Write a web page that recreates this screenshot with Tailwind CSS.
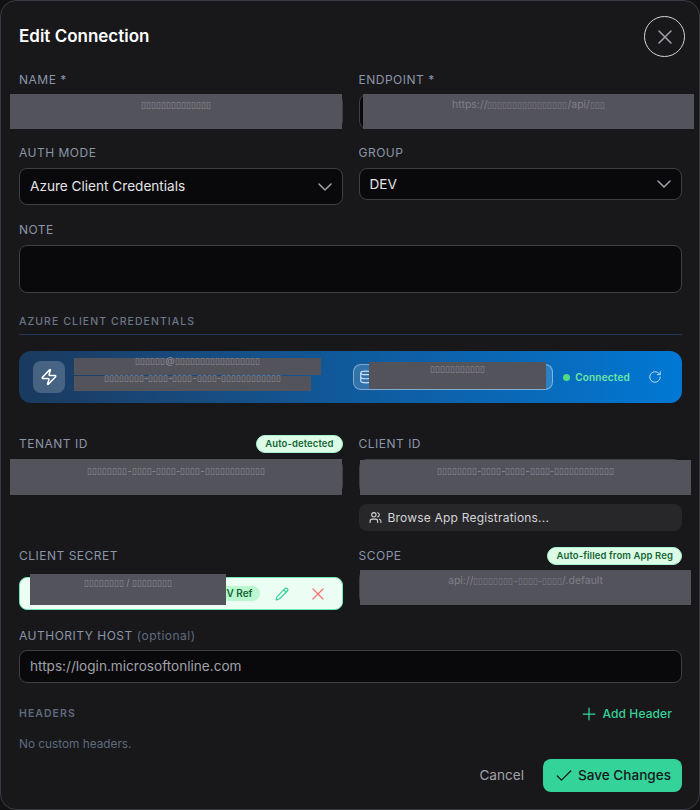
<!DOCTYPE html>
<html lang="en">
<head>
  <meta charset="UTF-8">
  <title>Edit Connection</title>
  <script src="https://cdn.jsdelivr.net/npm/@tailwindcss/browser@4"></script>
</head>
<body class="bg-[#111114] font-['Inter',sans-serif]">
  <div class="relative w-[700px] h-[810px] overflow-hidden rounded-2xl border border-[#3a3a42] bg-[#18181b] pl-[18px] pr-[17px] pt-[15px] text-white">

    <!-- Header -->
    <div class="flex h-[41px] items-center justify-between">
      <h2 class="text-[17px] font-semibold">Edit Connection</h2>
      <button class="-mr-[3px] flex h-[41px] w-[41px] items-center justify-center rounded-full border border-[#d4d4d8] text-[#a1a1aa]">
        <svg width="24" height="24" viewBox="0 0 24 24" fill="none" stroke="currentColor" stroke-width="1.5" stroke-linecap="round"><path d="M18 6 6 18M6 6l12 12"/></svg>
      </button>
    </div>

    <!-- Name / endpoint / auth / group -->
    <div class="mt-[15px] grid grid-cols-2 gap-x-4">
      <div>
        <label class="mb-[6px] block text-xs leading-4 tracking-[0.5px] text-[#8b95a7]">NAME *</label>
        <div class="h-[35px] rounded-lg border border-[#3f3f46] bg-[#09090b]"></div>
      </div>
      <div>
        <label class="mb-[6px] block text-xs leading-4 tracking-[0.5px] text-[#8b95a7]">ENDPOINT *</label>
        <div class="h-[35px] rounded-lg border border-[#3f3f46] bg-[#09090b]"></div>
      </div>
      <div class="mt-4">
        <label class="mb-[7px] block text-xs leading-4 tracking-[0.5px] text-[#8b95a7]">AUTH MODE</label>
        <div class="flex h-[37px] items-center justify-between rounded-lg border border-[#3f3f46] bg-[#09090b] pl-[10px] pr-[5px] text-[13.6px] text-[#e4e4e7]">
          Azure Client Credentials
          <svg width="24" height="24" viewBox="0 0 24 24" fill="none" stroke="#a1a1aa" stroke-width="1.5" stroke-linecap="round" stroke-linejoin="round"><path d="m6 9 6 6 6-6"/></svg>
        </div>
      </div>
      <div class="mt-4">
        <label class="mb-[7px] block text-xs leading-4 tracking-[0.5px] text-[#8b95a7]">GROUP</label>
        <div class="flex h-[32px] items-center justify-between rounded-lg border border-[#3f3f46] bg-[#09090b] pl-[10px] pr-[5px] text-[13.6px] text-[#e4e4e7]">
          DEV
          <svg width="24" height="24" viewBox="0 0 24 24" fill="none" stroke="#a1a1aa" stroke-width="1.5" stroke-linecap="round" stroke-linejoin="round"><path d="m6 9 6 6 6-6"/></svg>
        </div>
      </div>
    </div>

    <!-- Note -->
    <div class="mt-[17px]">
      <label class="mb-[7px] block text-xs leading-4 tracking-[0.5px] text-[#8b95a7]">NOTE</label>
      <div class="h-[48px] rounded-lg border border-[#3f3f46] bg-[#09090b]"></div>
    </div>

    <!-- Azure section -->
    <div class="mt-[21px] border-b border-[#24365a] pb-[4px] text-[10.5px] leading-4 font-medium tracking-widest text-[#6b7688]">AZURE CLIENT CREDENTIALS</div>

    <div class="mt-4 flex h-[52px] items-center rounded-xl bg-gradient-to-r from-[#1a3a5f] via-[#0f5a9c] to-[#0078d4] pl-[14px] pr-5">
      <div class="flex h-8 w-8 items-center justify-center rounded-lg bg-white/20">
        <svg width="18" height="18" viewBox="0 0 24 24" fill="none" stroke="white" stroke-width="2" stroke-linejoin="round"><path d="M4 14a1 1 0 0 1-.78-1.63l9.9-10.2a.5.5 0 0 1 .86.46l-1.92 6.02A1 1 0 0 0 13 10h7a1 1 0 0 1 .78 1.63l-9.9 10.2a.5.5 0 0 1-.86-.46l1.92-6.02A1 1 0 0 0 11 14z"/></svg>
      </div>
      <div class="ml-auto flex h-[26px] w-[200px] items-center rounded-lg border border-white/40 bg-white/15 pl-[5px]">
        <svg width="14" height="14" viewBox="0 0 24 24" fill="none" stroke="#cfe3f5" stroke-width="2"><ellipse cx="12" cy="5" rx="9" ry="3"/><path d="M3 5v14a9 3 0 0 0 18 0V5"/><path d="M3 12a9 3 0 0 0 18 0"/></svg>
      </div>
      <div class="ml-[10px] h-[7px] w-[7px] rounded-full bg-[#4ade80]"></div>
      <span class="ml-[5px] text-[10px] font-semibold tracking-[0.2px] text-[#6ee7a0]">Connected</span>
      <svg class="ml-[18px] -mt-[1px]" width="14" height="14" viewBox="0 0 24 24" fill="none" stroke="#cfe3f5" stroke-width="1.5" stroke-linecap="round" stroke-linejoin="round"><path d="M21 12a9 9 0 1 1-9-9c2.52 0 4.93 1 6.74 2.74L21 8"/><path d="M21 3v5h-5"/></svg>
    </div>

    <!-- Tenant / client / secret / scope -->
    <div class="mt-8 grid grid-cols-2 gap-x-4">
      <div>
        <div class="mb-[6px] flex h-[18px] items-center justify-between">
          <label class="text-xs tracking-[0.5px] text-[#8b95a7]">TENANT ID</label>
          <span class="flex h-[18px] items-center rounded-full border border-[#a7f3d0] bg-[#dcfce7] px-2 text-[9.5px] font-semibold tracking-[0.1px] text-[#166534]">Auto-detected</span>
        </div>
        <div class="h-[35px] rounded-lg border border-[#3f3f46] bg-[#09090b]"></div>
      </div>
      <div>
        <div class="mb-[6px] flex h-[18px] items-center">
          <label class="text-xs tracking-[0.5px] text-[#8b95a7]">CLIENT ID</label>
        </div>
        <div class="h-[35px] rounded-lg border border-[#3f3f46] bg-[#09090b]"></div>
        <button class="mt-[10px] flex h-[27px] w-full items-center gap-[6px] rounded-lg bg-[#27272a] px-[10px] text-xs tracking-[0.2px] text-[#d4d4d8]">
          <svg width="13" height="13" viewBox="0 0 24 24" fill="none" stroke="currentColor" stroke-width="2" stroke-linecap="round" stroke-linejoin="round"><path d="M16 21v-2a4 4 0 0 0-4-4H6a4 4 0 0 0-4 4v2"/><circle cx="9" cy="7" r="4"/><path d="M22 21v-2a4 4 0 0 0-3-3.87"/><path d="M16 3.13a4 4 0 0 1 0 7.75"/></svg>
          Browse App Registrations...
        </button>
      </div>
      <div class="mt-4">
        <div class="mb-3 flex h-[18px] items-center">
          <label class="text-xs tracking-[0.5px] text-[#8b95a7]">CLIENT SECRET</label>
        </div>
        <div class="flex h-[33px] items-center justify-end rounded-lg border border-[#6ee7b7] bg-[#ecfdf3] pr-[14px]">
          <span class="flex h-[15px] items-center rounded-full bg-[#bbf7d0] px-[7px] text-[10px] font-semibold text-[#166534]">KV Ref</span>
          <svg class="ml-[15px]" width="14" height="14" viewBox="0 0 24 24" fill="none" stroke="#34d399" stroke-width="2" stroke-linecap="round" stroke-linejoin="round"><path d="M21.17 6.81a2.82 2.82 0 0 0-3.99-3.99L3.84 16.17a2 2 0 0 0-.5.83l-1.32 4.35a.5.5 0 0 0 .62.62l4.35-1.32a2 2 0 0 0 .83-.5z"/><path d="m15 5 4 4"/></svg>
          <svg class="ml-[19px]" width="20" height="20" viewBox="0 0 24 24" fill="none" stroke="#f87171" stroke-width="1.5" stroke-linecap="round"><path d="M18 6 6 18M6 6l12 12"/></svg>
        </div>
      </div>
      <div class="mt-4">
        <div class="mb-[5px] flex h-[18px] items-center justify-between">
          <label class="text-xs tracking-[0.5px] text-[#8b95a7]">SCOPE</label>
          <span class="flex h-[18px] items-center rounded-full border border-[#a7f3d0] bg-[#dcfce7] px-2 text-[9.5px] font-semibold tracking-[0.1px] text-[#166534]">Auto-filled from App Reg</span>
        </div>
        <div class="h-[35px] rounded-lg border border-[#3f3f46] bg-[#09090b]"></div>
      </div>
    </div>

    <!-- Authority host -->
    <div class="mt-[18px]">
      <label class="mb-[6px] block text-xs leading-4 tracking-[0.5px] text-[#8b95a7]">AUTHORITY HOST <span class="text-[#5f6b7d]">(optional)</span></label>
      <div class="flex h-[33px] items-center rounded-lg border border-[#3f3f46] bg-[#09090b] px-[10px] text-[13.6px] text-[#a1a1aa]">https://login.microsoftonline.com</div>
    </div>

    <!-- Headers -->
    <div class="mt-[19px] flex h-6 items-center justify-between">
      <span class="text-[10.5px] font-semibold tracking-widest text-[#5f6b7d]">HEADERS</span>
      <button class="flex items-center gap-1 pr-[10px] text-xs font-medium tracking-[0.1px] text-[#34d399]">
        <svg width="20" height="20" viewBox="0 0 24 24" fill="none" stroke="currentColor" stroke-width="1.5" stroke-linecap="round"><path d="M5 12h14M12 5v14"/></svg>
        Add Header
      </button>
    </div>
    <p class="mt-[10px] text-[11.8px] leading-4 text-[#5f6b7d]">No custom headers.</p>

    <!-- Footer -->
    <div class="mt-[7px] flex items-center justify-end gap-[19px]">
      <button class="text-[13.6px] text-[#a1a1aa]">Cancel</button>
      <button class="flex h-[33px] w-[139px] items-center justify-center gap-1 rounded-lg bg-[#34d399] text-[13.6px] font-medium text-[#18181b]">
        <svg width="20" height="20" viewBox="0 0 24 24" fill="none" stroke="currentColor" stroke-width="1.5" stroke-linecap="round" stroke-linejoin="round"><path d="M20 6 9 17l-5-5"/></svg>
        Save Changes
      </button>
    </div>

    <!-- Redaction blocks lying over the fields -->
    <div class="absolute left-[9px] top-[93px] flex h-[35px] w-[332px] justify-center bg-[#53535c] pt-[3px] text-[9.4px] leading-4 text-[#8e8e96]">▯▯▯▯▯▯▯▯▯▯▯▯▯▯</div>
    <div class="absolute left-[362px] top-[93px] flex h-[35px] w-[331px] justify-center bg-[#53535c] pt-[3px] text-[10.5px] leading-4 text-[#7f7f88]"><span>https://<span class="text-[9.4px]">▯▯▯▯▯▯▯▯▯▯▯▯▯▯▯▯</span>/api/<span class="text-[9.4px]">▯▯▯</span></span></div>
    <div class="absolute left-[73px] top-[357px] flex h-[17px] w-[247px] justify-center bg-[#53535c] text-[9.4px] leading-[5px] text-[#8e8e96]">▯▯▯▯▯▯@▯▯▯▯▯▯▯▯▯▯▯▯▯▯▯▯▯</div>
    <div class="absolute left-[73px] top-[375px] flex h-[15px] w-[237px] justify-center bg-[#53535c] text-[9.4px] leading-[3px] text-[#8e8e96]">▯▯▯▯▯▯▯▯-▯▯▯▯-▯▯▯▯-▯▯▯▯-▯▯▯▯▯▯▯▯▯▯▯▯</div>
    <div class="absolute left-[368px] top-[361px] flex h-[27px] w-[177px] justify-center bg-[#53535c] text-[9.4px] leading-[14px] text-[#8e8e96]">▯▯▯▯▯▯▯▯▯▯▯</div>
    <div class="absolute left-[9px] top-[458px] flex h-[36px] w-[332px] justify-center bg-[#53535c] pt-[4px] text-[9.4px] leading-4 text-[#8e8e96]">▯▯▯▯▯▯▯▯-▯▯▯▯-▯▯▯▯-▯▯▯▯-▯▯▯▯▯▯▯▯▯▯▯▯</div>
    <div class="absolute left-[359px] top-[459px] flex h-[35px] w-[331px] justify-center bg-[#53535c] pt-[3px] text-[9.4px] leading-4 text-[#8e8e96]">▯▯▯▯▯▯▯▯-▯▯▯▯-▯▯▯▯-▯▯▯▯-▯▯▯▯▯▯▯▯▯▯▯▯</div>
    <div class="absolute left-[29px] top-[573px] flex h-[31px] w-[196px] justify-center bg-[#53535c] pt-[1px] text-[9.4px] leading-4 text-[#8e8e96]">▯▯▯▯▯▯▯▯ / ▯▯▯▯▯▯▯▯</div>
    <div class="absolute left-[359px] top-[569px] flex h-[35px] w-[331px] justify-center bg-[#53535c] pt-[3px] text-[10.5px] leading-4 text-[#7f7f88]"><span>api://<span class="text-[9.4px]">▯▯▯▯▯▯▯▯-▯▯▯▯-▯▯▯▯</span>/.default</span></div>
  </div>
</body>
</html>
